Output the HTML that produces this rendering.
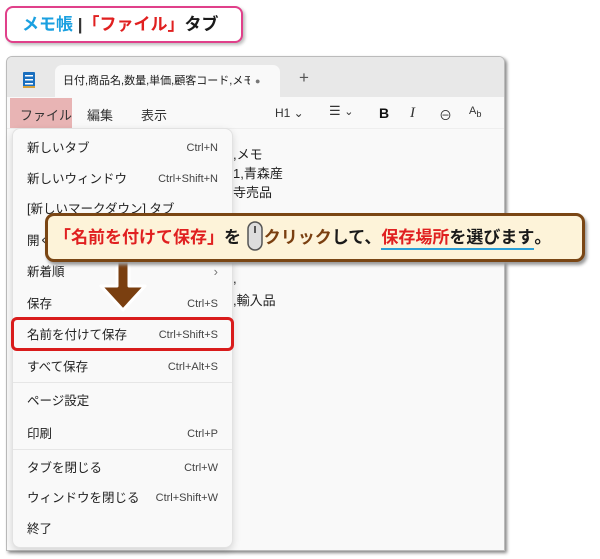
<!DOCTYPE html>
<html><head><meta charset="utf-8"><style>
*{margin:0;padding:0;box-sizing:border-box}
body{width:600px;height:559px;background:#fff;position:relative;overflow:hidden;font-family:"Liberation Sans","Noto Sans CJK JP",sans-serif;color:#1a1a1a}
.abs{position:absolute}
.title{left:5px;top:6px;width:238px;height:37px;border:2px solid #e0408a;border-radius:8px;background:#fff;box-shadow:2px 2px 3px #bbb;font-weight:bold;font-size:17px;line-height:33px;padding-left:15px;white-space:nowrap}
.win{left:6px;top:56px;width:499px;height:495px;background:#f9f9f9;border:1px solid #bbb;border-radius:6px 6px 0 0;box-shadow:2px 2px 3px #888;overflow:hidden}
.tabs{left:0;top:0;width:100%;height:40px;background:#e8e8e8}
.tab{left:48px;top:8px;width:225px;height:33px;background:#f9f9f9;border-radius:7px 7px 0 0;font-size:11px;line-height:32px;padding-left:8px;white-space:nowrap}
.menubar span{position:absolute;font-size:13px;top:48px;color:#333}
.doc{font-size:13px;color:#222;white-space:nowrap}
.menu{left:12px;top:128px;width:221px;height:420px;background:#f9f9f9;border:1px solid #e2e2e2;border-radius:8px;box-shadow:0 3px 8px rgba(0,0,0,.15)}
.it{position:absolute;left:14px;right:14px;font-size:12.5px;color:#222;height:20px;line-height:20px;white-space:nowrap}
.it b{position:absolute;right:0;font-weight:normal;font-size:11px;color:#444}
.sep{position:absolute;left:0;right:0;height:1px;background:#e6e6e6}
.call{left:45px;top:213px;width:540px;height:49px;background:#fdf3d9;border:3px solid #7a4614;border-radius:9px;box-shadow:2px 3px 3px #999;font-weight:bold;font-size:17px;line-height:43px;padding-left:6px;white-space:nowrap}
</style></head><body>
<div class="abs title"><span style="color:#1aa0e0">メモ帳</span> <span style="color:#333">|</span><span style="color:#e02020">「ファイル」</span><span>タブ</span></div>

<div class="abs win">
 <div class="abs tabs"></div>
 <svg class="abs" style="left:15px;top:14px" width="14" height="18"><rect x="1" y="1" width="12" height="16" rx="1" fill="#1a6fbf"/><rect x="3" y="4" width="8" height="1.5" fill="#fff"/><rect x="3" y="8" width="8" height="1.5" fill="#fff"/><rect x="3" y="12" width="8" height="1.5" fill="#fff"/><rect x="1" y="15" width="12" height="2" fill="#d8a23a"/></svg>
 <div class="abs tab"><span style="display:inline-block;width:187px;overflow:hidden;vertical-align:top">日付,商品名,数量,単価,顧客コード,メモ,</span><span style="position:absolute;left:200px;color:#777;font-size:9px">●</span></div>
 <div class="abs" style="left:292px;top:11px;font-size:17px;color:#555">+</div>
 <div class="abs" style="left:3px;top:41px;width:62px;height:30px;background:#e8b4b4"></div>
 <div class="menubar"><span style="left:13px">ファイル</span><span style="left:80px">編集</span><span style="left:134px">表示</span>
 <span style="left:268px;font-size:12px;top:49px">H1 ⌄</span>
 <span style="left:322px;top:46px">☰ <small>⌄</small></span>
 <span style="left:372px;font-weight:bold;font-size:14px;color:#111">B</span>
 <span style="left:403px;font-style:italic;font-family:'Liberation Serif';font-size:15px">I</span>
 <span style="left:432px">⊖</span>
 <span style="left:462px;font-size:11px">A<sub>b</sub></span></div>
 <div class="abs" style="left:0;top:71px;width:100%;height:1px;background:#eee"></div>
 <div class="abs doc" style="left:226px;top:87px">,メモ</div>
 <div class="abs doc" style="left:226px;top:106px">1,青森産</div>
 <div class="abs doc" style="left:226px;top:125px">寺売品</div>
 <div class="abs doc" style="left:226px;top:214px">,</div>
 <div class="abs doc" style="left:226px;top:233px">,輸入品</div>
</div>

<div class="abs menu">
 <div class="it" style="top:9px">新しいタブ<b>Ctrl+N</b></div>
 <div class="it" style="top:40px">新しいウィンドウ<b>Ctrl+Shift+N</b></div>
 <div class="it" style="top:70px">[新しいマークダウン] タブ</div>
 <div class="it" style="top:102px">開く</div>
 <div class="it" style="top:133px">新着順<b style="font-size:13px;color:#777">›</b></div>
 <div class="it" style="top:165px">保存<b>Ctrl+S</b></div>
 <div class="it" style="top:196px">名前を付けて保存<b>Ctrl+Shift+S</b></div>
 <div class="it" style="top:228px">すべて保存<b>Ctrl+Alt+S</b></div>
 <div class="sep" style="top:253px"></div>
 <div class="it" style="top:262px">ページ設定</div>
 <div class="it" style="top:295px">印刷<b>Ctrl+P</b></div>
 <div class="sep" style="top:320px"></div>
 <div class="it" style="top:329px">タブを閉じる<b>Ctrl+W</b></div>
 <div class="it" style="top:359px">ウィンドウを閉じる<b>Ctrl+Shift+W</b></div>
 <div class="it" style="top:390px">終了</div>
</div>
<div class="abs" style="left:11px;top:317px;width:223px;height:34px;border:3px solid #d91c1c;border-radius:6px"></div>

<svg class="abs" style="left:95px;top:258px" width="60" height="56"><path d="M22 0 V28 H6 L28 52 L50 28 H34 V0 Z" fill="#7a3f10" stroke="#fff" stroke-width="3" stroke-linejoin="round"/></svg>

<div class="abs call"><span style="color:#e02020">「名前を付けて保存」</span>を <svg width="18" height="30" style="vertical-align:-8px"><rect x="2" y="1" width="14" height="28" rx="7" fill="#ddd" stroke="#555" stroke-width="1.5"/><rect x="8" y="5" width="2" height="7" fill="#555"/></svg><span style="color:#7a3f10">クリック</span>して、<span style="color:#e02020;border-bottom:2px solid #2aa0d8;line-height:20px;display:inline-block">保存場所</span><span style="border-bottom:2px solid #2aa0d8;line-height:20px;display:inline-block">を選びます</span>。</div>
</body></html>
